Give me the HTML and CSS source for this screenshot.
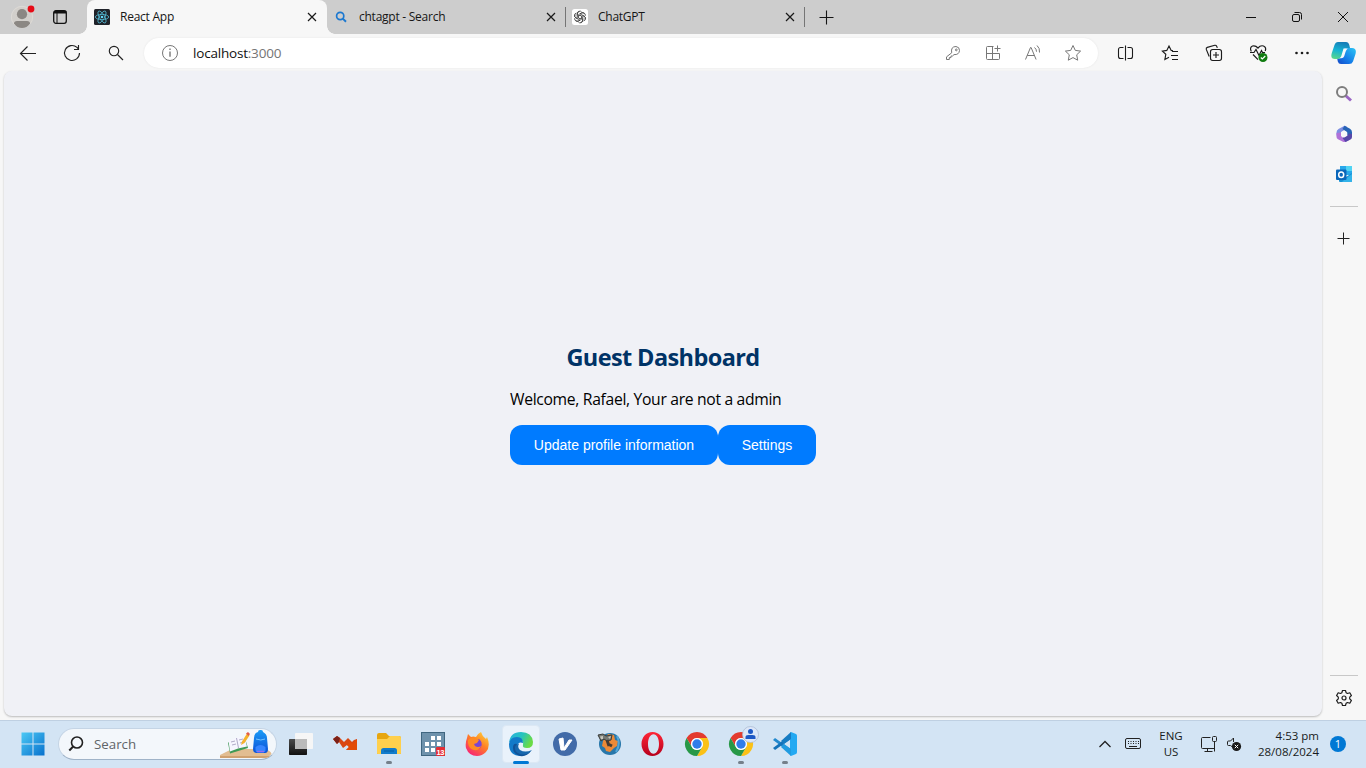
FILE: index.html
```html
<!DOCTYPE html>
<html lang="en">
<head>
<meta charset="utf-8">
<title>React App</title>
<link rel="stylesheet" href="styles.css">
</head>
<body>
<div class="desktop">
  <header class="titlebar">
    <svg class="avatar" width="26" height="26" viewBox="0 0 26 26"><circle cx="12" cy="13" r="10.7" fill="#d2cfcb" stroke="#dedbd7"/><circle cx="12" cy="10.200" r="5.100" fill="#8b8783"/><path d="M4 19.500Q4 17 7 17h10q3 0 3 2.500Q17 24 12 24T4 19.500z" fill="#8b8783"/><circle cx="21" cy="5" r="3.400" fill="#e60b16"/></svg>
    <svg class="workspaces" width="16" height="16" viewBox="0 0 16 16" fill="none" stroke="#111"><rect x="1.700" y="1.700" width="12.600" height="12.600" rx="2.200" stroke-width="1.300"/><path d="M1.800 3.200h12.400" stroke-width="2.600"/><path d="M5 4v10"/></svg>
    <div class="tab tab-active">
      <svg class="favicon" width="16" height="16" viewBox="0 0 16 16"><rect width="16" height="16" rx="1.500" fill="#20232a"/><g fill="none" stroke="#53b9d3" stroke-width=".8"><ellipse cx="8" cy="8" rx="6.700" ry="2.600"/><ellipse cx="8" cy="8" rx="6.700" ry="2.600" transform="rotate(60 8 8)"/><ellipse cx="8" cy="8" rx="6.700" ry="2.600" transform="rotate(120 8 8)"/></g><circle cx="8" cy="8" r="1.300" fill="#61dafb"/></svg>
      <span class="tab-title">React App</span>
      <svg class="tab-close" width="10" height="10" viewBox="0 0 10 10"><path d="M1 1l8 8M9 1l-8 8"/></svg>
    </div>
    <div class="tab tab-search">
      <svg class="favicon" width="16" height="16" viewBox="0 0 16 16" fill="none" stroke="#1b78d0"><circle cx="7.200" cy="7" r="3.600" stroke-width="1.700"/><path d="M9.800 9.600l3.200 3.200" stroke-width="2"/></svg>
      <span class="tab-title">chtagpt - Search</span>
      <svg class="tab-close" width="10" height="10" viewBox="0 0 10 10"><path d="M1 1l8 8M9 1l-8 8"/></svg>
    </div>
    <div class="tab tab-chat">
      <svg class="favicon" width="16" height="16" viewBox="0 0 16 16"><rect width="16" height="16" rx="2.500" fill="#fff"/><g fill="none" stroke="#333" stroke-width=".75"><g id="petal"><path d="M5.300 6.500V4.700a2.500 2.500 0 0 1 4.300-1.800M6.500 8.800V5.700l2.700-1.600a2.500 2.500 0 0 1 3.300.7"/></g><use href="#petal" transform="rotate(60 8 8)"/><use href="#petal" transform="rotate(120 8 8)"/><use href="#petal" transform="rotate(180 8 8)"/><use href="#petal" transform="rotate(240 8 8)"/><use href="#petal" transform="rotate(300 8 8)"/></g></svg>
      <span class="tab-title">ChatGPT</span>
      <svg class="tab-close" width="10" height="10" viewBox="0 0 10 10"><path d="M1 1l8 8M9 1l-8 8"/></svg>
    </div>
    <svg class="new-tab" width="15" height="15" viewBox="0 0 15 15" stroke="#151515" stroke-width="1.100"><path d="M7.500 .5v14M.5 7.500h14"/></svg>
    <div class="window-controls">
      <svg width="12" height="12" viewBox="0 0 12 12"><path d="M1 6.500h10"/></svg>
      <svg width="12" height="12" viewBox="0 0 12 12"><rect x="1.500" y="3.500" width="7" height="7" rx="1.500"/><path d="M3.500 1.500h5a2 2 0 0 1 2 2v5"/></svg>
      <svg width="12" height="12" viewBox="0 0 12 12"><path d="M1 1l10 10M11 1L1 11"/></svg>
    </div>
  </header>

  <div class="toolbar">
    <div class="nav">
      <svg width="18" height="18" viewBox="0 0 18 18"><path d="M17 9.500H1.500M8.500 2.500l-7 7 7 7"/></svg>
      <svg width="18" height="18" viewBox="0 0 18 18"><path d="M16.500 9A7.500 7.500 0 1 1 14 3.400l1.500 1.600M15.500 1v4.500H11"/></svg>
      <svg width="18" height="18" viewBox="0 0 18 18"><circle cx="7" cy="7" r="4.700"/><path d="M10.500 10.500l5.500 5.500"/></svg>
    </div>
    <div class="address">
      <svg width="18" height="18" viewBox="0 0 18 18"><circle cx="9" cy="9" r="7.500"/><path d="M9 7.500v5.300M9 4.600v1.500" stroke-width="1.400"/></svg>
      <span class="url">localhost<span class="port">:3000</span></span>
      <div class="address-actions">
        <svg width="18" height="18" viewBox="0 0 18 18"><path d="M7.700 8.800Q6.500 2.600 12 2.500 15.600 3 15.500 6.500 15 11 10 10.600L8.500 12H7v1.600H5.300v1.900H2.500v-2.600z"/><circle cx="12.300" cy="5.900" r=".9"/></svg>
        <svg width="18" height="18" viewBox="0 0 18 18"><path d="M9.500 2.500h-6q-1 0-1 1v11q0 1 1 1h11q1 0 1-1v-5h-13M8.500 2.500v13M13.500 1.500v6M10.500 4.500h6"/></svg>
        <svg width="18" height="18" viewBox="0 0 18 18"><path d="M1.500 15.500l5-12h.6l5 12M3.200 11.500h7M10.500 3.500q2 1.400 2 4.200M13 1.500q3 2.500 2.500 7"/></svg>
        <svg width="18" height="18" viewBox="0 0 18 18"><path d="M9 1.500l2.300 4.900 5.300.7-3.900 3.700 1 5.400L9 13.600l-4.700 2.600 1-5.400L1.400 7.100l5.300-.7z"/></svg>
      </div>
    </div>
    <div class="browser-actions">
      <svg width="18" height="18" viewBox="0 0 18 18"><path d="M6.500 3.500h-3a2 2 0 0 0-2 2v7a2 2 0 0 0 2 2h3M10.500 3.500h3a2 2 0 0 1 2 2v7a2 2 0 0 1-2 2h-3M8.500 1.500v15" stroke-width="1.100"/></svg>
      <svg width="18" height="18" viewBox="0 0 18 18"><path d="M12 6.700L10.200 6.400 8 2 5.800 6.400 1.400 7.100l3.400 3.200-.9 5.100 4.100-2.200M11 7.500h6M10 11.500h7M11 15.500h6"/></svg>
      <svg width="18" height="18" viewBox="0 0 18 18"><path d="M4.200 12.500L1.300 5.400q-.4-1.500 1-2L9.800 1.300q1.400-.2 2 1.100l.5 1.500"/><rect x="5.500" y="5.500" width="11" height="11" rx="2.200"/><path d="M11 8v6M8 11h6"/></svg>
      <svg width="20" height="20" viewBox="0 0 20 20"><path d="M2.300 8.500Q.3 4.500 3.500 3q3-.8 5.500 2 2.500-3 5.500-2 3.200 1.500 1.700 5M1 9.500h4l2-3 3 6 2.500-5 1 2h2.500M4 11.500l5 5.200" stroke-width="1.200"/><circle cx="14" cy="14.500" r="4.500" fill="#107c10" stroke="none"/><path d="M11.800 14.500l1.500 1.500 3-3" stroke="#fff"/></svg>
      <svg class="dots" width="18" height="18" viewBox="0 0 18 18"><circle cx="3.500" cy="9" r="1.300"/><circle cx="9" cy="9" r="1.300"/><circle cx="14.500" cy="9" r="1.300"/></svg>
    </div>
    <svg class="copilot" width="25" height="24" viewBox="0 0 25 24"><defs><linearGradient id="cpA" x1=".5" y1="0" x2=".25" y2="1"><stop stop-color="#167eb8"/><stop offset=".5" stop-color="#16b4d4"/><stop offset="1" stop-color="#58d78b"/></linearGradient><linearGradient id="cpB" x1="1" y1="0" x2="0" y2="1"><stop stop-color="#2cc6f5"/><stop offset=".6" stop-color="#147be8"/><stop offset="1" stop-color="#1548c6"/></linearGradient></defs><path d="M7 1h8q2.500 0 3.300 3l.7 3h-3.500q-2 0-2.700 2.200L10.300 16Q9.500 18 6.800 18H4Q-1 18 .8 12L3.500 4Q4.500 1 7 1z" fill="url(#cpA)"/><path d="M15.500 7H21q5 0 3.500 6l-2.500 7.500Q21 23 18 23H10q-2.500 0-3.200-2.500L6.300 18q3 0 4-2L13 9q.7-2 2.500-2z" fill="url(#cpB)"/><path d="M12.500 7.500h4.300Q15.200 8.500 14.500 11l-1.300 4.300q-.7 2-3 2H8.500Q9.800 16.500 10.300 15z" fill="#f5f9fc"/></svg>
  </div>

  <div class="browser-body">
    <main class="page">
      <section class="dashboard">
        <h2>Guest Dashboard</h2>
        <p>Welcome, Rafael, Your are not a admin</p>
        <div class="buttons"><button>Update profile information</button><button>Settings</button></div>
      </section>
    </main>
    <aside class="sidebar">
      <div class="side-apps">
        <svg width="18" height="18" viewBox="0 0 18 18" fill="none"><path d="M10.500 10.500l5.500 5" stroke="#9b66c4" stroke-width="3"/><circle cx="7" cy="7" r="5" stroke="#7d7d7d" stroke-width="2"/></svg>
        <svg width="18" height="18" viewBox="0 0 18 18"><path d="M9.500.8L3.500 4Q1.500 5 1.500 7.500v3l4.500 1V7l5.500-3.200V1.300z" fill="#7d8fe2"/><path d="M9.500.8l5.500 3q2 1 2 3.500V12l-5-1.500V7L7.500 4z" fill="#2764b6"/><path d="M1.500 8v4q0 1.500 1.500 2.300l5 2.500q1.500.6 3 0l3.500-2-2.500-3-3.500 1.500L6 11V7.500z" fill="#b172d8"/><path d="M17 9v3q0 1.500-1.500 2.500l-5 2.500-3-4 4.500-2.500 2-2z" fill="#5647a8"/><path d="M9.300 5.700l3 1.700v3.400l-3 1.700-3-1.700V7.400z" fill="#f7f7f7"/></svg>
        <svg width="18" height="18" viewBox="0 0 18 18"><path d="M5 1h11q1 0 1 1v8H5z" fill="#28a8ea"/><path d="M11 1h6v5h-6z" fill="#50d4f3"/><path d="M4 8l7 4 6-4v8q0 1-1 1H5q-1 0-1-1z" fill="#1691d5"/><path d="M9 15l8-6v7q0 1-1 1H7z" fill="#33b3e9"/><rect x="1" y="4.500" width="10.500" height="10.500" rx="1" fill="#0a67ba"/><ellipse cx="6.200" cy="9.700" rx="2.500" ry="2.800" fill="none" stroke="#fff" stroke-width="1.500"/></svg>
      </div>
      <div class="rule"></div>
      <svg class="side-add" width="13" height="13" viewBox="0 0 13 13" stroke="#222"><path d="M6.500 .5v12M.5 6.500h12"/></svg>
      <div class="side-spacer"></div>
      <div class="rule"></div>
      <svg class="side-gear" width="18" height="18" viewBox="0 0 18 18" fill="none" stroke="#1c1c1c" stroke-width="1.200"><path d="M7.500 1.500h3l.6 2.200 1.400.8 2.300-.7 1.600 2.700-1.700 1.600v1.800l1.700 1.600-1.600 2.700-2.300-.7-1.400.8-.6 2.200h-3l-.6-2.200-1.400-.8-2.300.7-1.600-2.700 1.700-1.600V8.100L1.600 6.500l1.600-2.700 2.300.7 1.400-.8z" stroke-linejoin="round"/><circle cx="9" cy="9" r="2"/></svg>
    </aside>
  </div>

  <footer class="taskbar">
    <svg class="start" width="24" height="24" viewBox="0 0 24 24"><defs><linearGradient id="win" x1="0" y1="0" x2="1" y2="1"><stop stop-color="#4cc9f5"/><stop offset="1" stop-color="#0871cd"/></linearGradient></defs><path d="M.5 .5H11.500v11H.500zM12.500 .5h11v11h-11zM.5 12.500h11v11H.5zM12.500 12.500h11v11h-11z" fill="url(#win)"/></svg>
    <div class="search">
      <svg width="16" height="16" viewBox="0 0 16 16" fill="none" stroke="#202020" stroke-width="1.600"><circle cx="9" cy="6.500" r="5.500"/><path d="M5.200 10.500L1.300 14.500" stroke-width="2"/></svg>
      <span>Search</span>
      <svg class="doodle" width="52" height="30" viewBox="0 0 52 30"><defs><linearGradient id="bag" x2="0" y2="1"><stop stop-color="#1a9cf6"/><stop offset="1" stop-color="#0a50d8"/></linearGradient></defs><path d="M0 26l12-6h33q6 2 6.500 5l-2 2q-2 2-5 2H0z" fill="#e2bd91"/><path d="M0 27h50l-1.500 1q-2 1-5 1H0z" fill="#d0a16f"/><path d="M8 13.500l17-4 3 9.500-18 5.500z" fill="#3f9a55"/><path d="M8.500 12l8-3 8-1.500 2.500 10-9 2-8 3z" fill="#f6f5ff"/><path d="M16.500 9L18.500 19M11 13l4-1M12 16l4-1M19 11l4-1M20 14l4-1" stroke="#b0abc8" fill="none"/><path d="M22 12.500l5-8 2.500 2-5 7.500-3.500 2z" fill="#f5b22b"/><path d="M26 4.500L28 3l2 2-1.500 2z" fill="#e35b47"/><path d="M34 9q0-5 4-6 0-2 2-2h1q2 0 2 2 4 2 4 6l1 11q0 4-3 4h-8q-4 0-4-4z" fill="url(#bag)"/><path d="M35.500 18q5-4 10 0v3q0 2.500-2.500 2.500h-5q-2.500 0-2.500-2.500z" fill="#3585ff"/><path d="M36 10q5 2 9 0" stroke="#70c4ff" fill="none"/><path d="M37 22.500h7" stroke="#936cf0" stroke-width="1.500"/></svg>
    </div>
    <nav class="apps">
      <div class="app"><svg width="26" height="26" viewBox="0 0 26 26"><defs><linearGradient id="tv" x2="0" y2="1"><stop stop-color="#4b4b4b"/><stop offset="1" stop-color="#111"/></linearGradient></defs><rect x="1" y="8" width="18" height="16" rx=".7" fill="url(#tv)"/><rect x="7" y="2" width="18" height="16" rx=".7" fill="#f6f6f6"/><path d="M7 8h12v10H7z" fill="#bababa"/></svg></div>
      <div class="app"><svg width="26" height="26" viewBox="0 0 26 26"><path d="M1 8l4-3 3 2 4 4 4-4 4 4 2-2 3-1v11H14l3-3-2-2-4 3-4-6-2 2z" fill="#d94712"/><path d="M1 8l4-3 3 2-1 4-2 2z" fill="#7b2119"/><path d="M14 19l3-3-2-2 3-3 3 2 4-5v11z" fill="#e24b06"/></svg></div>
      <div class="app running"><svg width="26" height="26" viewBox="0 0 26 26"><path d="M1 4q0-2 2-2h7l3 3h10q2 0 2 2v15q0 1-1 1H2q-1 0-1-1z" fill="#e7a610"/><path d="M1 8h10l3-3h9q2 0 2 2v15q0 1-1 1H2q-1 0-1-1z" fill="#ffd04d"/><path d="M5 23v-3.500Q5 17 7.500 17h11q2.500 0 2.500 2.500V23z" fill="#117ccc"/><path d="M8 20h10" stroke="#075ca2"/></svg></div>
      <div class="app"><svg width="26" height="26" viewBox="0 0 26 26"><rect x="1.500" y="1.500" width="23" height="23" fill="#6e92ac" stroke="#3f6680"/><g fill="#fff"><path d="M11 5h4v4h-4zM17 5h4v4h-4zM5 11h4v4H5zM11 11h4v4h-4zM17 11h4v4h-4zM5 17h4v4H5zM11 17h4v4h-4z"/></g><rect x="16" y="16" width="9" height="9" rx="1" fill="#e52e35"/><text class="calendar-day" x="16.500" y="23.500">13</text></svg></div>
      <div class="app"><svg width="26" height="26" viewBox="0 0 26 26"><defs><linearGradient id="ff" x1="1" y1="0" x2=".3" y2="1"><stop stop-color="#ffe13e"/><stop offset=".5" stop-color="#ff8024"/><stop offset="1" stop-color="#f82673"/></linearGradient></defs><path d="M3 7l1-4 3 3q2-1 5 0 1-3 5-5 1 4 5 7l1-2q4 9-1 15-4 4-9 4-8 0-11-8-1-5 1-10z" fill="url(#ff)"/><path d="M9 9q4 1 6-1 4 3 2 8-2 3-5 2-4-1-4-5z" fill="#7b45d1"/><path d="M4 9q4-4 8-1l3 1-2 3-3 1 1 2q3 2 6 0-2 5-7 4-5-1-6-7z" fill="#ff8b23"/></svg></div>
      <div class="app focused"><svg width="26" height="26" viewBox="0 0 26 26"><defs><linearGradient id="edge" x2="1" y2=".4"><stop stop-color="#29aee1"/><stop offset=".55" stop-color="#25c4bf"/><stop offset="1" stop-color="#6adb45"/></linearGradient></defs><path d="M1 12Q2 1 13 1q11 0 12 10 0 6-6 6-5 0-4-3 1-5-4-6-7-1-10 4z" fill="url(#edge)"/><path d="M1 13q1-7 8-7 6 0 6 6-5-2-6 4 0 5 4 9Q1 25 1 13z" fill="#127ac9"/><path d="M9 13q-3 6 4 9 5 2 10-2-4 6-11 5Q5 23 5 17q0-5 4-4z" fill="#115398"/><path d="M11 13q-2 3 1 6 5 3 12 0-5 6-12 4-6-2-5-7 1-3 4-3z" fill="#1767ad"/></svg></div>
      <div class="app"><svg width="26" height="26" viewBox="0 0 26 26"><circle cx="13" cy="13" r="12" fill="#426ba8"/><path d="M7 8l4-1 1 10 5-8h3l-7 10H9z" fill="#fff" stroke="#fff" stroke-linejoin="round"/></svg></div>
      <div class="app"><svg width="26" height="26" viewBox="0 0 26 26"><circle cx="14" cy="13" r="11" fill="#2877aa"/><path d="M12 3l6 1 1 5 3 1-1 5-3 2-4 4-4-1-1-3-3-2 1-5z" fill="#ed8a37"/><path d="M2 4l5-1 3 2 6-1-1 5-4 1-3-2-3 2z" fill="#777a75" stroke="#393c3a"/><path d="M11 9l2 6M12 13l4 2" stroke="#463b34" stroke-width="3"/><path d="M4 5.500l3-.5v3H5zM12 6l3-1-1 3z" fill="#c8c7bd"/><path d="M21 5q4 8-1 16" stroke="#54a7d8" fill="none" stroke-width="2"/></svg></div>
      <div class="app"><svg width="26" height="26" viewBox="0 0 26 26"><defs><linearGradient id="opera" x2="0" y2="1"><stop stop-color="#ff2637"/><stop offset="1" stop-color="#b6001d"/></linearGradient></defs><path fill-rule="evenodd" d="M12.500 1C6 1 1.500 6.500 1.500 13s4.500 12 11 12 11-5.500 11-12-4.500-12-11-12zm1 2.300c3.300 0 5.500 4.300 5.500 9.700s-2.200 9.700-5.500 9.700S8 18.400 8 13s2.200-9.700 5.500-9.700z" fill="url(#opera)"/></svg></div>
      <div class="app"><svg width="26" height="26" viewBox="0 0 26 26"><g id="chrome"><path d="M2.600 7A12 12 0 0 1 23.400 7H13a6 6 0 0 0-5.200 9z" fill="#e33b2e"/><path d="M23.400 7A12 12 0 0 1 13 25l5.200-9A6 6 0 0 0 13 7z" fill="#fbc116"/><path d="M2.600 7A12 12 0 0 0 13 25l5.200-9A6 6 0 0 1 7.800 16z" fill="#279847"/><circle cx="13" cy="13" r="6" fill="#fff"/><circle cx="13" cy="13" r="4.700" fill="#2f7de9"/></g></svg></div>
      <div class="app running"><svg width="26" height="26" viewBox="0 0 26 26"><use href="#chrome"/></svg><svg class="profile" width="17" height="17" viewBox="0 0 17 17"><circle cx="8.500" cy="8.500" r="8" fill="#dce7f8" stroke="#a8b7d0" stroke-width=".7"/><circle cx="8.500" cy="5.500" r="2.500" fill="#1d58c5"/><path d="M3.500 13v-2q0-2 3-2h4q3 0 3 2v2z" fill="#1d58c5"/></svg></div>
      <div class="app running"><svg width="26" height="26" viewBox="0 0 26 26"><path d="M1 9l2-2 17 12v4z" fill="#2389ce"/><path d="M1 17l2 2L20 7V3z" fill="#1472b9"/><path d="M19 1l5 2q1 .5 1 2v16q0 1.500-1 2l-5 2-1-1V2z" fill="#23a9f2"/><path d="M19 1v7l-7 5-3-3z" fill="#167cc3"/><path d="M19 25v-7l-7-5-3 3z" fill="#219be0"/></svg></div>
    </nav>
    <div class="tray">
      <svg class="chevron" width="14" height="10" viewBox="0 0 14 10"><path d="M1.500 8L7 2.500 12.500 8" stroke-width="1.300"/></svg>
      <svg class="keyboard" width="18" height="14" viewBox="0 0 18 14"><rect x="1.500" y="1.500" width="15" height="10" rx="1.500"/><path d="M4 4.500h11M4 6.500h11" stroke-dasharray="1 1.500"/><path d="M5 9.500h8"/></svg>
      <div class="language">ENG<br>US</div>
      <svg class="monitor" width="18" height="18" viewBox="0 0 18 18"><path d="M10.500 2.500h-8q-1 0-1 1v9q0 1 1 1h12V8M7.500 13.500v3M4.500 16.500h8"/><rect x="12.500" y="1.500" width="4" height="5" rx="1"/><path d="M14.500 6.500v10"/></svg>
      <svg class="speaker" width="18" height="18" viewBox="0 0 18 18"><path d="M7.500 12L5.500 10.500h-2q-1 0-1-1V7q0-1 1-1h2L8.500 3v4"/><circle cx="11.500" cy="11.500" r="4.600" fill="#191919" stroke="none"/><path d="M9.800 9.800l3.400 3.400M13.200 9.800l-3.400 3.400" stroke="#fff"/></svg>
      <div class="clock">4:53 pm<br><span>28/08/2024</span></div>
      <div class="badge">1</div>
    </div>
  </footer>
</div>
</body>
</html>
```
FILE: styles.css
```css
* { box-sizing: border-box; }
body { margin: 0; font-family: "Open Sans", "Noto Sans", sans-serif; }
svg { display: block; flex: none; }
.desktop { width: 1366px; height: 768px; display: flex; flex-direction: column; overflow: hidden; background: #f7f7f7; }
.titlebar { height: 34px; flex: none; display: flex; align-items: center; background: #cdcdcd; }
.avatar { margin-left: 10px; }
.workspaces { margin: 0 19px 0 16px; }
.tab { width: 239px; height: 34px; display: flex; align-items: center; font-size: 12px; letter-spacing: -.25px; color: #161616; padding-left: 7px; }
.tab-active { width: 240px; background: #f7f7f7; border-radius: 8px 8px 0 0; position: relative; }
.tab-active::before, .tab-active::after { content: ""; position: absolute; bottom: 0; width: 8px; height: 8px; }
.tab-active::before { left: -8px; background: radial-gradient(circle at 0 0, #cdcdcd 7.5px, #f7f7f7 8px); }
.tab-active::after { right: -8px; background: radial-gradient(circle at 100% 0, #cdcdcd 7.5px, #f7f7f7 8px); }
.tab-title { flex: 1; padding: 0 0 2px 10px; white-space: nowrap; }
.tab-close { margin-right: 10px; stroke: #191919; stroke-width: 1.2; fill: none; }
.tab-search, .tab-chat { background: linear-gradient(#757575, #757575) right center / 1px 20px no-repeat; }
.tab-search { padding-left: 6px; }
.tab-chat { padding-left: 6px; }
.new-tab { margin-left: 14px; }
.window-controls { margin-left: auto; display: flex; gap: 34px; padding-right: 17px; stroke: #111; fill: none; }
.toolbar { height: 37px; flex: none; display: flex; align-items: center; }
.nav { width: 144px; display: flex; gap: 26px; padding-left: 19px; fill: none; stroke: #222; stroke-width: 1.15; }
.address { width: 954px; height: 30px; border-radius: 15px; background: #fff; box-shadow: 0 0 2px #e3e3e3; display: flex; align-items: center; padding: 0 16px 0 17px; fill: none; stroke: #777; stroke-width: 1; }
.url { margin-left: 14px; font-size: 13.5px; letter-spacing: -.2px; color: #111; }
.port { color: #757575; }
.address-actions { display: flex; gap: 22px; margin-left: auto; }
.browser-actions { display: flex; align-items: center; gap: 26px; margin-left: 19px; fill: none; stroke: #1c1c1c; stroke-width: 1.15; }
.browser-actions svg:nth-child(4) { margin-right: -2px; }
.dots { fill: #1b1b1b; stroke: none; }
.copilot { margin-left: 20px; }
.browser-body { height: 649px; display: flex; padding-left: 4px; }
.page { width: 1318px; height: 645px; border-radius: 8px; background: #f0f1f6; box-shadow: 0 1px 2px #bbb; display: flex; align-items: center; justify-content: center; }
.dashboard { width: 306px; padding-top: 19px; }
h2 { margin: 0; text-align: center; color: #003366; font-size: 23.5px; line-height: 32px; letter-spacing: -.6px; }
p { margin: 16px 0 15px; color: #000; font-size: 15.7px; letter-spacing: -.32px; line-height: 21px; white-space: nowrap; }
.buttons { display: flex; }
button { width: 208px; height: 40px; border: 0; border-radius: 12px; padding: 0; background: #007bff; color: #fff; font: 14px "Liberation Sans", Arial, sans-serif; }
button + button { width: 98px; }
.sidebar { width: 44px; display: flex; flex-direction: column; align-items: center; padding-top: 14px; }
.side-apps { display: flex; flex-direction: column; gap: 22px; }
.rule { width: 28px; height: 1px; background: #c8c8c8; flex: none; }
.side-apps + .rule { margin-top: 23px; }
.side-add { margin: 25px 1px 0 0; }
.side-spacer { flex: 1; }
.side-gear { margin: 13px 0 13px; }
.taskbar { height: 48px; flex: none; display: flex; align-items: center; background: #d3e4f4; border-top: 1px solid #bfd0e2; padding-bottom: 1px; }
.start { margin: 0 13px 0 21px; }
.search { width: 219px; height: 32px; display: flex; align-items: center; border: 1px solid #c4d4e5; border-bottom-color: #9fb3c8; border-radius: 16px; background: #f3f7fb; padding-left: 9px; font-size: 13.3px; color: #606468; }
.search span { margin-left: 10px; }
.doodle { margin-left: auto; margin-right: 4px; }
.apps { display: flex; margin-left: 2px; }
.app { width: 44px; height: 44px; display: flex; align-items: center; justify-content: center; position: relative; }
.running::after, .focused::after { content: ""; position: absolute; left: 19px; bottom: 2px; width: 6px; height: 3px; border-radius: 2px; background: #75808b; }
.focused::before { content: ""; position: absolute; inset: 3px; border-radius: 4px; background: #e9f2fb; border: 1px solid #dce8f4; }
.focused svg { position: relative; }
.focused::after { left: 14px; width: 16px; background: #0078d4; }
.profile { position: absolute; top: 4px; left: 23px; }
.calendar-day { font: bold 7.5px "Liberation Sans", sans-serif; letter-spacing: -.3px; fill: #fff; }
.tray { display: flex; align-items: center; margin-left: auto; padding-right: 20px; fill: none; stroke: #222; stroke-width: 1; color: #171b20; font-size: 11.5px; line-height: 16px; }
.keyboard { margin-left: 12px; }
.language { width: 40px; margin-left: 9px; text-align: center; }
.monitor { margin-left: 9px; }
.speaker { margin-left: 7px; }
.clock { width: 76px; text-align: right; white-space: nowrap; }
.badge { width: 16px; height: 16px; margin-left: 11px; border-radius: 50%; background: #0078d4; color: #fff; text-align: center; font-size: 11px; }
```
